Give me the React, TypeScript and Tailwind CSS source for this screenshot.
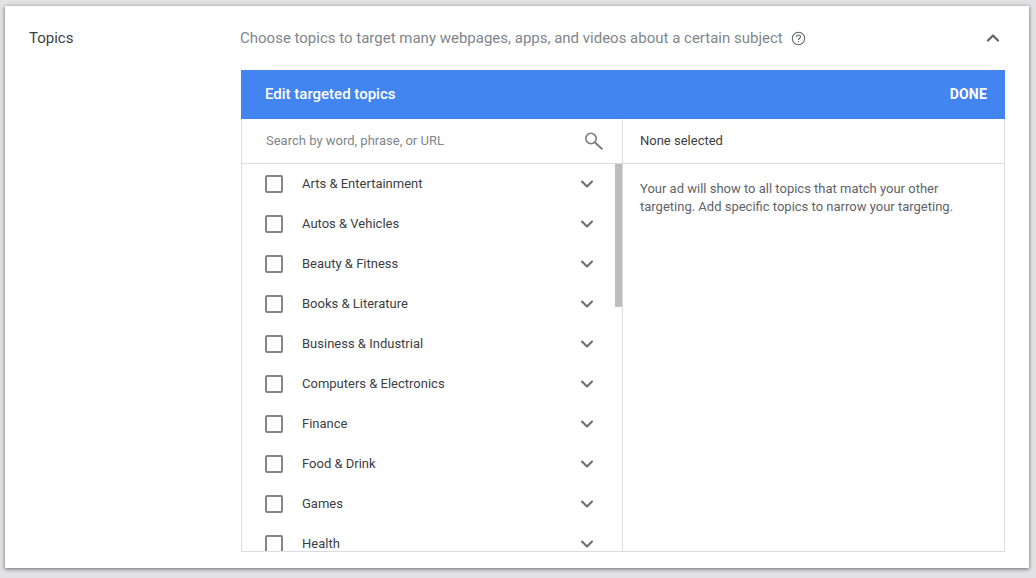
import { ChevronDown, ChevronUp } from 'lucide-react'

const topics = [
    'Arts & Entertainment',
    'Autos & Vehicles',
    'Beauty & Fitness',
    'Books & Literature',
    'Business & Industrial',
    'Computers & Electronics',
    'Finance',
    'Food & Drink',
    'Games',
    'Health',
]

function HelpIcon() {
    return (
        <svg width="15" height="15" viewBox="0 0 15 15" fill="none" stroke="#5f6368" strokeWidth="1.1">
            <circle cx="7.5" cy="7.5" r="6.2" />
            <path d="M5.5 6c0-1.2.9-2 2-2s2 .8 2 1.8c0 1.4-2 1.5-2 3.2" />
            <path d="M7.5 10v1.2" />
        </svg>
    )
}

function SearchIcon() {
    return (
        <svg width="18" height="18" viewBox="0 0 18 18" fill="none" stroke="#7b7b80" strokeWidth="1.6">
            <circle cx="6" cy="6.5" r="5.2" />
            <path d="M10 10.5l7.5 6.8" strokeWidth="2" />
        </svg>
    )
}

function TopicRow({ label }: { label: string }) {
    return (
        <div className="h-10 shrink-0 flex items-center pl-[23px] pr-[18px]">
            <div className="w-[18px] h-[18px] shrink-0 rounded-[2px] border-2 border-[#85858a]" />
            <span className="ml-[19px] flex-1 text-[13px] text-[#3c4043]">{label}</span>
            <ChevronDown size={20} strokeWidth={2.5} className="text-[#6b6b70]" />
        </div>
    )
}

export default function App() {
    return (
        <div className="w-[1036px] h-[578px] bg-[#e2e2e4] pt-[6px] pl-[5px] font-['Roboto',sans-serif] overflow-hidden">
            <div className="w-[1024px] h-[562px] bg-white shadow-[0_1px_4px_rgba(0,0,0,0.55)] pt-[21px] pl-[24px] flex">
                <div className="w-[212px] shrink-0 text-[15px] leading-[22px] text-[#3c4043]">Topics</div>

                <div className="w-[764px] flex flex-col">
                    <div className="h-[22px] flex items-center text-[15px] text-[#80868b]">
                        <span className="-ml-px">Choose topics to target many webpages, apps, and videos about a certain subject</span>
                        <span className="ml-[8px]"><HelpIcon /></span>
                        <ChevronUp size={20} strokeWidth={2.6} className="ml-auto mr-[2px] text-[#5f6368]" />
                    </div>

                    <div className="mt-[21px] h-[482px] flex flex-col">
                        <div className="h-[49px] shrink-0 bg-[#4285f0] flex items-center justify-between pl-[24px] pr-[18px] text-white">
                            <span className="text-[15px] font-medium">Edit targeted topics</span>
                            <span className="text-[14px] font-bold tracking-[0.2px]">DONE</span>
                        </div>

                        <div className="flex-1 min-h-0 flex border-x border-b border-[#dadce0]">
                            <div className="w-[381px] shrink-0 flex flex-col border-r border-[#dadce0]">
                                <div className="h-[45px] shrink-0 flex items-center pl-[24px] pr-[19px] border-b border-[#dadce0]">
                                    <span className="flex-1 text-[13px] text-[#80868b]">Search by word, phrase, or URL</span>
                                    <SearchIcon />
                                </div>
                                <div className="flex-1 min-h-0 flex overflow-hidden">
                                    <div className="flex-1 flex flex-col">
                                        {topics.map(topic => (
                                            <TopicRow key={topic} label={topic} />
                                        ))}
                                    </div>
                                    <div className="w-[7px] shrink-0">
                                        <div className="h-[143px] bg-[#bdbdbd]" />
                                    </div>
                                </div>
                            </div>

                            <div className="flex-1 flex flex-col">
                                <div className="h-[45px] shrink-0 flex items-center px-[17px] border-b border-[#dadce0] text-[13px] text-[#3c4043]">
                                    None selected
                                </div>
                                <p className="pt-[16px] px-[17px] text-[13px] leading-[18px] text-[#5f6368]">
                                    Your ad will show to all topics that match your other
                                    <br />
                                    targeting. Add specific topics to narrow your targeting.
                                </p>
                            </div>
                        </div>
                    </div>
                </div>
            </div>
        </div>
    )
}
